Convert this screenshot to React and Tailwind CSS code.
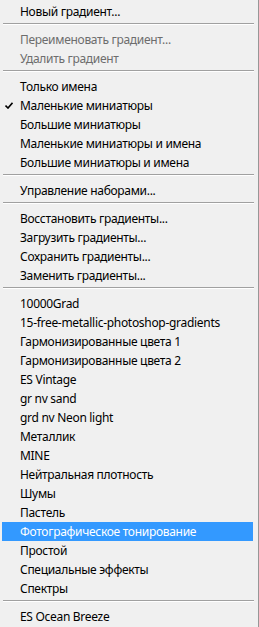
import React from "react";

const groups = [
  [{ t: "Новый градиент..." }],
  [{ t: "Переименовать градиент...", d: true }, { t: "Удалить градиент", d: true }],
  [
    { t: "Только имена" },
    { t: "Маленькие миниатюры", c: true },
    { t: "Большие миниатюры" },
    { t: "Маленькие миниатюры и имена" },
    { t: "Большие миниатюры и имена" },
  ],
  [{ t: "Управление наборами..." }],
  [
    { t: "Восстановить градиенты..." },
    { t: "Загрузить градиенты..." },
    { t: "Сохранить градиенты..." },
    { t: "Заменить градиенты..." },
  ],
  [
    { t: "10000Grad" },
    { t: "15-free-metallic-photoshop-gradients" },
    { t: "Гармонизированные цвета 1" },
    { t: "Гармонизированные цвета 2" },
    { t: "ES Vintage" },
    { t: "gr nv sand" },
    { t: "grd nv Neon light" },
    { t: "Металлик" },
    { t: "MINE" },
    { t: "Нейтральная плотность" },
    { t: "Шумы" },
    { t: "Пастель" },
    { t: "Фотографическое тонирование", h: true },
    { t: "Простой" },
    { t: "Специальные эффекты" },
    { t: "Спектры" },
  ],
  [{ t: "ES Ocean Breeze" }],
];

function Check() {
  return (
    <svg width="8" height="7" viewBox="0 0 8 7" className="block">
      <path d="M0.5 3.5 L3 6 L7.5 0.8" fill="none" stroke="#000" strokeWidth="1.6" />
    </svg>
  );
}

function Item({ t, d, c, h }) {
  return (
    <div
      className={
        "relative flex h-[19px] items-center ml-[2px] mr-[5px] pl-[18px] " +
        (h ? "bg-[#3399ff] text-white " : d ? "text-[#6d6d6d] " : "text-black ")
      }
    >
      {c && (
        <span className="absolute left-[3px] top-[6px]">
          <Check />
        </span>
      )}
      <span className="leading-none whitespace-nowrap">{t}</span>
    </div>
  );
}

function Sep() {
  return (
    <div className="pt-[2px] pb-[5px] ml-[3px] mr-[4px]">
      <div className="h-px bg-[#a0a0a0]" />
      <div className="h-px bg-white" />
    </div>
  );
}

export default function App() {
  return (
    <div
      className="w-[259px] h-[627px] bg-[#f0f0f0] border-r border-[#979797] pt-[2px] overflow-hidden text-[12px] tracking-[-0.3px]"
      style={{ fontFamily: '"Noto Sans", "Open Sans", sans-serif' }}
    >
      {groups.map((g, i) => (
        <React.Fragment key={i}>
          {i > 0 && <Sep />}
          {g.map((it, j) => (
            <Item key={j} {...it} />
          ))}
        </React.Fragment>
      ))}
    </div>
  );
}
